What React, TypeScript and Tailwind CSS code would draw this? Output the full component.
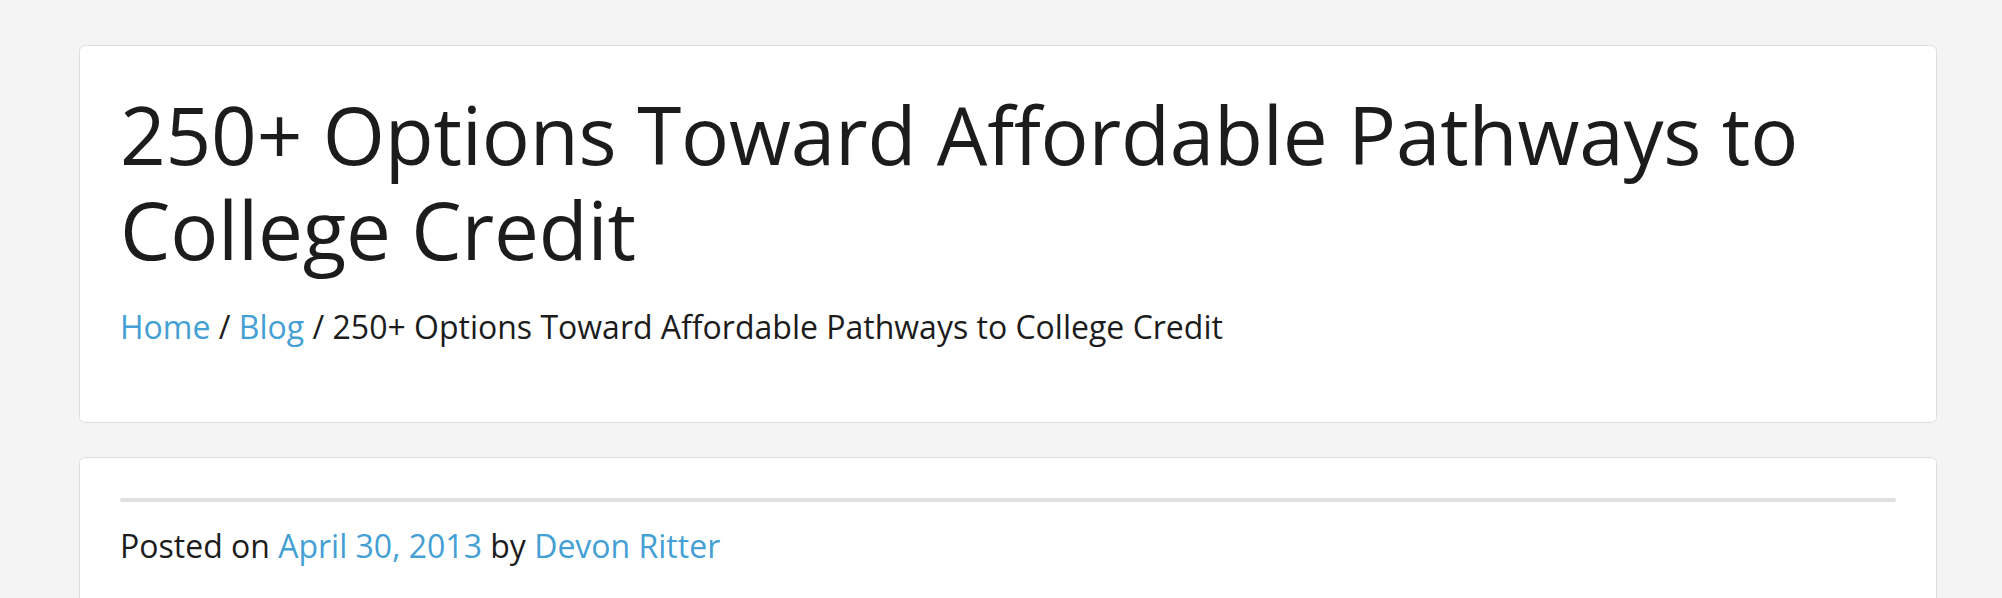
export default function App() {
  return (
    <div className="h-[598px] w-full overflow-hidden bg-[#f4f4f4] pt-[45px] pl-[79px] pr-[65px] font-['Open_Sans',sans-serif] text-[#1c1c1c]">
      <div className="flex flex-col gap-[34px]">
        <header className="rounded-[6px] border border-[#dedede] bg-white px-[40px] pt-[40px] pb-[71px]">
          <h1 className="text-[80px] leading-[95px] font-normal tracking-[-0.2px]">
            250+ Options Toward Affordable Pathways to College Credit
          </h1>
          <nav className="mt-[27px] text-[32px] leading-[48px]">
            <a href="#" className="text-[#449fd4]">Home</a>
            <span> / </span>
            <a href="#" className="text-[#449fd4]">Blog</a>
            <span> / 250+ Options Toward Affordable Pathways to College Credit</span>
          </nav>
        </header>
        <article className="h-[200px] rounded-[6px] border border-[#dedede] bg-white px-[40px] pt-[40px]">
          <div className="h-[4px] rounded-full bg-[#e0e0e0]" />
          <p className="mt-[20px] text-[32px] leading-[48px]">
            Posted on <a href="#" className="text-[#449fd4]">April 30, 2013</a> by{" "}
            <a href="#" className="text-[#449fd4]">Devon Ritter</a>
          </p>
        </article>
      </div>
    </div>
  )
}
